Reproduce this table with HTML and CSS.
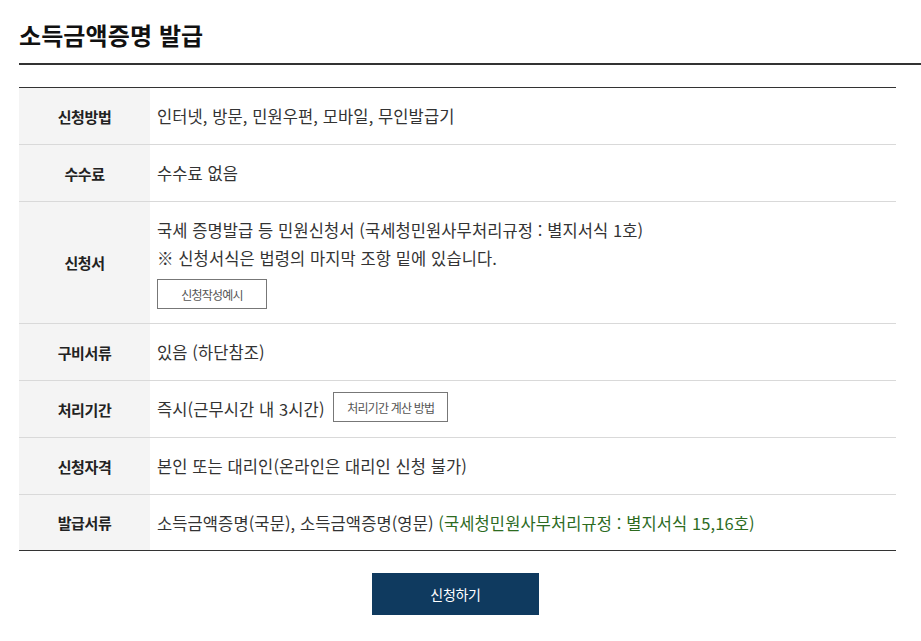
FILE: index.html
```html
<!DOCTYPE html>
<html lang="ko">
<head>
<meta charset="utf-8">
<title>소득금액증명 발급</title>
<link rel="stylesheet" href="styles.css">
</head>
<body>
<div class="page">
  <h1 class="title">소득금액증명 발급</h1>
  <table class="info">
    <tbody>
      <tr>
        <th>신청방법</th>
        <td>인터넷, 방문, 민원우편, 모바일, 무인발급기</td>
      </tr>
      <tr>
        <th>수수료</th>
        <td>수수료 없음</td>
      </tr>
      <tr>
        <th>신청서</th>
        <td>
          <p class="line">국세 증명발급 등 민원신청서 (국세청민원사무처리규정 : 별지서식 1호)</p>
          <p class="line">※ 신청서식은 법령의 마지막 조항 밑에 있습니다.</p>
          <button class="small-btn block" type="button">신청작성예시</button>
        </td>
      </tr>
      <tr>
        <th>구비서류</th>
        <td>있음 (하단참조)</td>
      </tr>
      <tr>
        <th>처리기간</th>
        <td>즉시(근무시간 내 3시간) <button class="small-btn inline" type="button">처리기간 계산 방법</button></td>
      </tr>
      <tr>
        <th>신청자격</th>
        <td>본인 또는 대리인(온라인은 대리인 신청 불가)</td>
      </tr>
      <tr class="last">
        <th>발급서류</th>
        <td>소득금액증명(국문), 소득금액증명(영문) <span class="green">(국세청민원사무처리규정 : 별지서식 15,16호)</span></td>
      </tr>
    </tbody>
  </table>
  <div class="actions">
    <button class="apply" type="button">신청하기</button>
  </div>
</div>
</body>
</html>
```

FILE: styles.css
```css
html, body {
  margin: 0;
  padding: 0;
  background: #fff;
}
body {
  font-family: "Noto Sans CJK KR", "Noto Sans", sans-serif;
  color: #333;
}
.page {
  padding: 18px 0 0 19px;
}
.title {
  margin: 0;
  font-size: 24px;
  line-height: 34px;
  font-weight: 700;
  color: #111;
  letter-spacing: 0.1px;
  padding-bottom: 11px;
  border-bottom: 2px solid #333;
}
.info {
  margin-top: 22px;
  width: 877px;
  border-collapse: collapse;
  border-top: 1px solid #333;
  border-bottom: 1px solid #333;
}
.info tr + tr th,
.info tr + tr td {
  border-top: 1px solid #d9d9d9;
}
.info th {
  width: 131px;
  background: #f4f4f4;
  font-size: 15px;
  font-weight: 700;
  color: #222;
  text-align: center;
  vertical-align: middle;
  padding: 0;
  letter-spacing: -0.4px;
}
.info td {
  padding: 14px 8px 14px 7px;
  font-size: 16.5px;
  line-height: 28px;
  color: #333;
  vertical-align: middle;
  letter-spacing: 0.1px;
}
.info tr.last td {
  padding-bottom: 13px;
}
.line {
  margin: 0;
}
.small-btn {
  font-family: inherit;
  font-size: 12px;
  letter-spacing: -0.8px;
  color: #555;
  background: #fff;
  border: 1px solid #777;
  height: 30px;
  min-width: 110px;
  padding: 0 10px;
  box-sizing: border-box;
  cursor: pointer;
}
.small-btn.block {
  display: block;
  margin-top: 7px;
}
.small-btn.inline {
  vertical-align: top;
  padding: 0 13px;
  margin: -3px 0 1px 4px;
}
.green {
  color: #2d6b1f;
}
.actions {
  width: 877px;
  display: flex;
  justify-content: center;
  margin-top: 22px;
}
.apply {
  width: 167px;
  height: 42px;
  background: #0f3a5f;
  color: #fff;
  border: 0;
  font-family: inherit;
  font-size: 14px;
  letter-spacing: -0.3px;
  margin-right: 4px;
  cursor: pointer;
}
```
